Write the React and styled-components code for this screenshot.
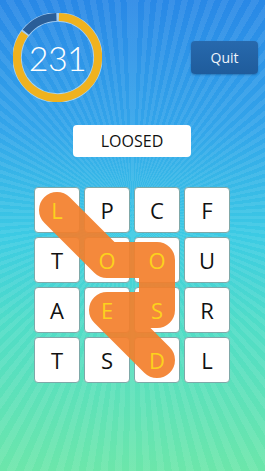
import React from "react";
import styled, { createGlobalStyle } from "styled-components";

const Global = createGlobalStyle`
  html, body { margin: 0; padding: 0; }
  body { font-family: "Open Sans", "Noto Sans", sans-serif; }
`;

const Page = styled.div`
  position: relative;
  width: 265px;
  height: 471px;
  box-sizing: border-box;
  padding: 13px 7px 0 13px;
  overflow: hidden;
  display: flex;
  flex-direction: column;
  background:
    repeating-conic-gradient(from 0deg at 50% 46%, rgba(255,255,255,0.08) 0deg 1.6deg, rgba(255,255,255,0) 1.6deg 3.2deg),
    linear-gradient(180deg, #2988e6 0%, #33a6ea 28%, #3ccbe4 50%, #4fdcc8 68%, #6ce6aa 100%);
`;

const Header = styled.div`
  display: flex;
  justify-content: space-between;
  align-items: flex-start;
`;

const RingBox = styled.div`
  position: relative;
  width: 89px;
  height: 89px;
  display: flex;
  align-items: center;
  justify-content: center;
`;

const RingSvg = styled.svg`
  position: absolute;
  inset: 0;
`;

const Score = styled.span`
  position: relative;
  font-family: "Lato", "Open Sans", sans-serif;
  font-weight: 300;
  font-size: 34px;
  color: #ffffff;
  letter-spacing: -0.5px;
  margin-top: -1px;
`;

const QuitButton = styled.button`
  margin-top: 28px;
  width: 67px;
  height: 33px;
  border: none;
  border-radius: 4px;
  background: linear-gradient(180deg, #2769ad 0%, #1f5c9c 100%);
  box-shadow: 0 1px 2px rgba(0, 40, 90, 0.35);
  color: #eef4fb;
  font-family: "Open Sans", sans-serif;
  font-size: 14px;
  padding: 0;
`;

const WordBox = styled.div`
  align-self: center;
  margin-top: 23px;
  margin-right: 7px;
  width: 118px;
  height: 32px;
  box-sizing: border-box;
  background: #ffffff;
  border-radius: 4px;
  display: flex;
  align-items: center;
  justify-content: center;
  font-family: "Open Sans", sans-serif;
  font-size: 16px;
  color: #111;
`;

const Grid = styled.div`
  position: relative;
  align-self: center;
  margin-top: 30px;
  margin-right: 7px;
  display: grid;
  grid-template-columns: repeat(4, 46px);
  grid-auto-rows: 46px;
  gap: 4px;
`;

const Tile = styled.div`
  box-sizing: border-box;
  background: #ffffff;
  border: 1px solid #7fa8a8;
  border-radius: 4px;
  display: flex;
  align-items: center;
  justify-content: center;
`;

const Letter = styled.span`
  position: relative;
  z-index: 2;
  font-family: "Open Sans", "Noto Sans", sans-serif;
  font-size: 22px;
  color: ${(p) => (p.$active ? "#fcd21c" : "#111111")};
`;

const PathSvg = styled.svg`
  position: absolute;
  left: 0;
  top: 0;
  z-index: 1;
  opacity: 0.92;
  pointer-events: none;
`;

const letters = [
  "L", "P", "C", "F",
  "T", "O", "O", "U",
  "A", "E", "S", "R",
  "T", "S", "D", "L",
];
const active = new Set([0, 5, 6, 9, 10, 14]);

const R = 40.5;
const C = 44.5;
function arc(startDeg, endDeg) {
  const toXY = (d) => {
    const a = ((d - 90) * Math.PI) / 180;
    return [C + R * Math.cos(a), C + R * Math.sin(a)];
  };
  const [x1, y1] = toXY(startDeg);
  const [x2, y2] = toXY(endDeg);
  const large = endDeg - startDeg > 180 ? 1 : 0;
  return `M${x1} ${y1} A${R} ${R} 0 ${large} 1 ${x2} ${y2}`;
}

export default function App() {
  return (
    <>
      <Global />
      <Page>
        <Header>
          <RingBox>
            <RingSvg width="89" height="89" viewBox="0 0 89 89">
              <circle cx={C} cy={C} r={R} fill="none" stroke="rgba(255,255,255,0.55)" strokeWidth="9.5" />
              <path d={arc(2, 306)} fill="none" stroke="#efb21f" strokeWidth="8" />
              <path d={arc(308.5, 358.5)} fill="none" stroke="#2a5e98" strokeWidth="8" />
            </RingSvg>
            <Score>231</Score>
          </RingBox>
          <QuitButton>Quit</QuitButton>
        </Header>
        <WordBox>LOOSED</WordBox>
        <Grid>
          {letters.map((l, i) => (
            <Tile key={i}>
              <Letter $active={active.has(i)}>{l}</Letter>
            </Tile>
          ))}
          <PathSvg width="196" height="196" viewBox="0 0 196 196">
            <path
              d="M23 23 L73 73 L123 73 L123 123 L73 123 L123 173"
              fill="none"
              stroke="#f47f2c"
              strokeWidth="36"
              strokeLinecap="round"
              strokeLinejoin="round"
            />
          </PathSvg>
        </Grid>
      </Page>
    </>
  );
}
